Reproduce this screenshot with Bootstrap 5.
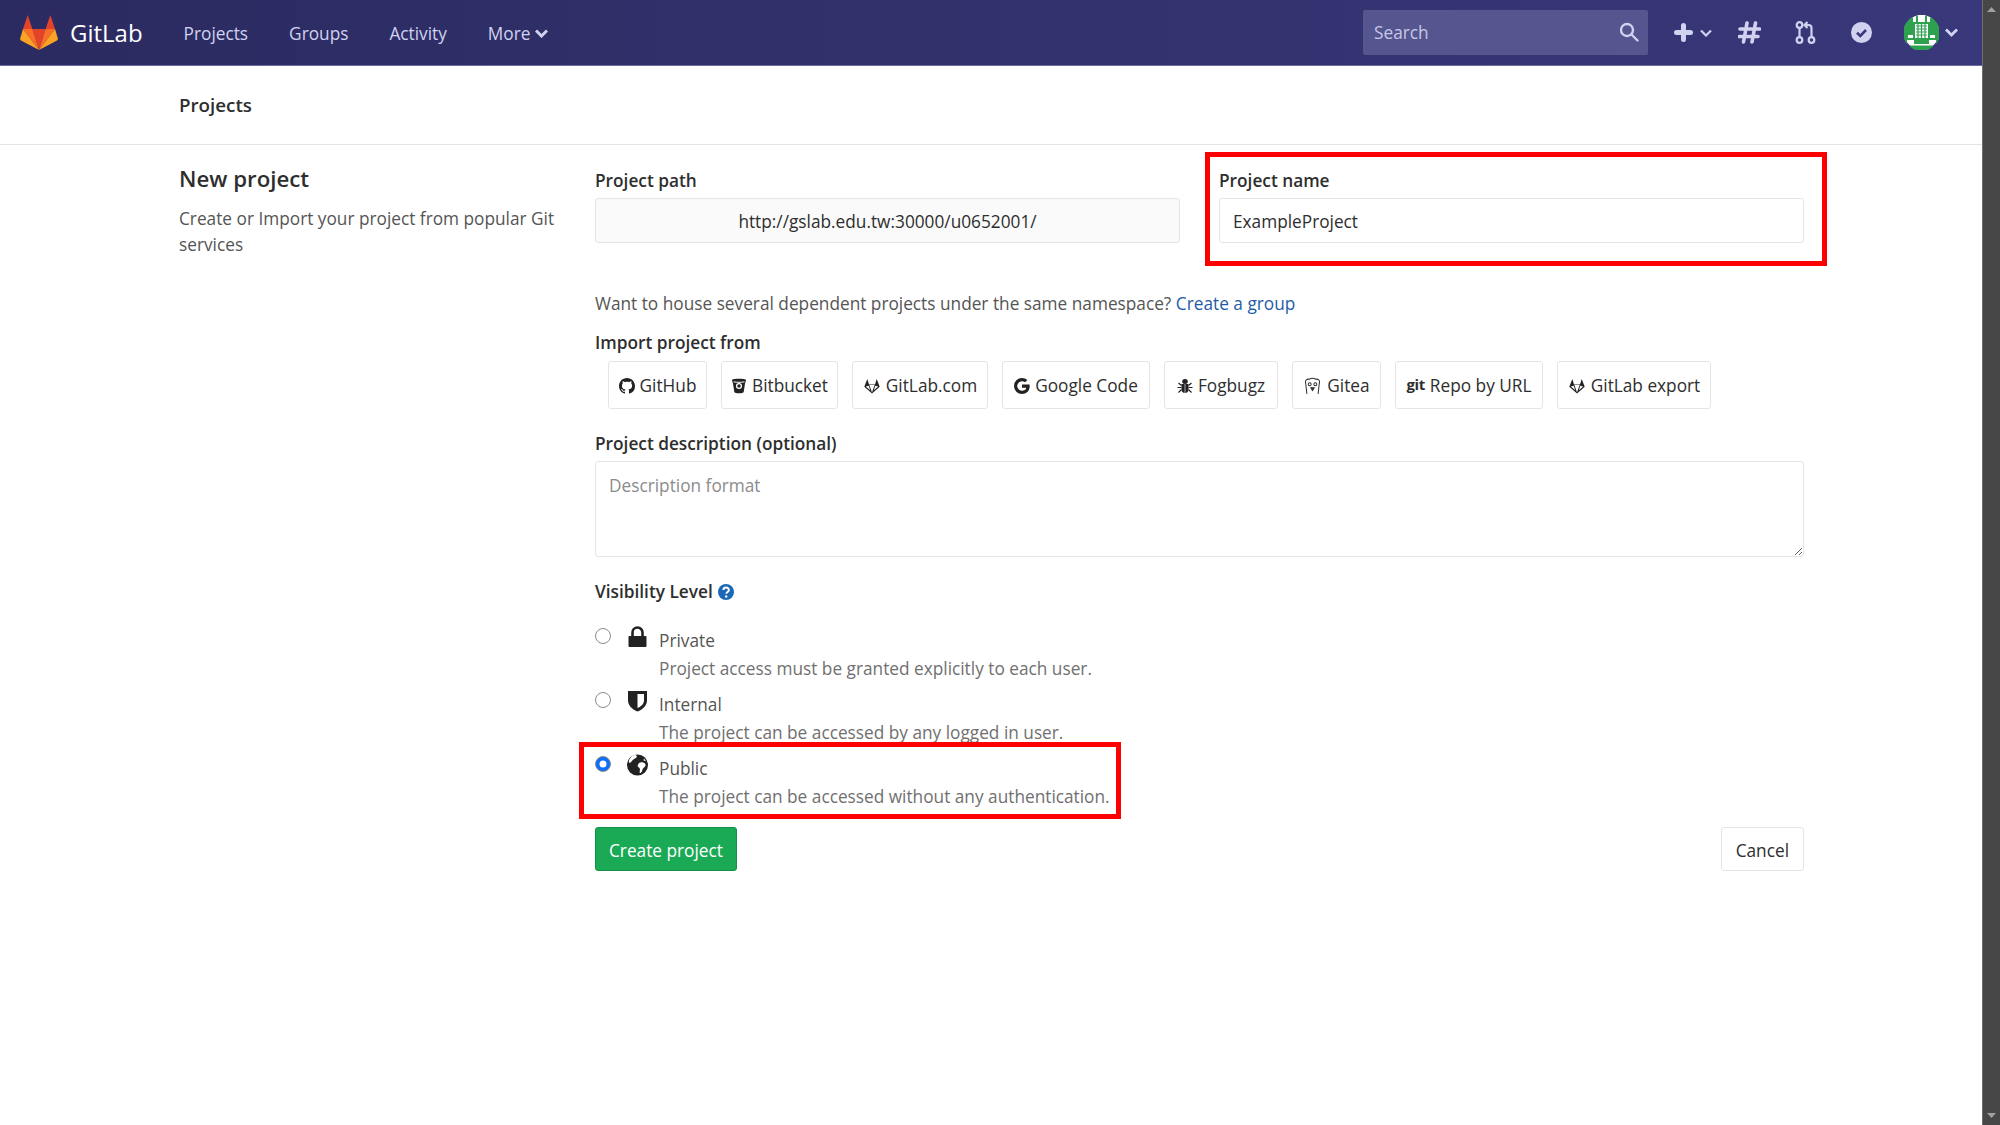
<!DOCTYPE html>
<html lang="en">

<head>
    <meta charset="UTF-8">
    <meta name="viewport" content="width=device-width, initial-scale=1.0">
    <title>New Project - GitLab</title>
    <link href="https://cdn.jsdelivr.net/npm/bootstrap@5.3.3/dist/css/bootstrap.min.css" rel="stylesheet">
    <style>
        body {
            font-family: "Open Sans", "Liberation Sans", sans-serif;
            font-size: 17.25px;
            color: #2e2e2e;
            background: #fff;
            height: 1125px;
            overflow: hidden;
            display: flex;
        }

        .page-area {
            flex: 1 1 auto;
            min-width: 0;
        }

        /* browser scrollbar as it looks in the picture */
        .fake-scroll {
            width: 18px;
            flex: none;
            background: #474747;
            border-left: 1px solid #6f6f6f;
            display: flex;
            flex-direction: column;
            justify-content: space-between;
            align-items: center;
            padding: 7px 0;
        }

        .fake-scroll svg {
            width: 9px;
            height: 5px;
            fill: #a0a0a0;
        }

        .gl-nav {
            height: 66px;
            padding: 0 24px 0 20px;
            background: linear-gradient(90deg, #2b2b61, #38387a);
            border-bottom: 1px solid #6c6c9e;
        }

        .gl-brand {
            display: flex;
            align-items: center;
            gap: 12px;
            padding: 0;
            margin: 0 41px 0 0;
            color: #fff;
            font-size: 24px;
        }

        .gl-brand:hover {
            color: #fff;
        }

        .gl-brand svg {
            width: 38px;
            height: 35px;
        }

        .gl-links {
            gap: 41px;
            padding-top: 2px;
        }

        .navbar-expand .gl-links .nav-link {
            padding: 0;
            color: #d1d1f0;
            font-size: 17.25px;
            display: flex;
            align-items: center;
            gap: 4px;
        }

        .gl-search {
            position: relative;
            width: 285px;
            height: 45px;
        }

        .gl-search input {
            width: 100%;
            height: 100%;
            padding: 0 40px 0 11px;
            background: #55558f;
            border: 0;
            border-radius: 2px;
            font-size: 17.25px;
        }

        .gl-search input::placeholder {
            color: #c8c8e6;
        }

        .gl-search svg {
            position: absolute;
            top: 12px;
            right: 9px;
            width: 20px;
            height: 20px;
        }

        .nav-ic {
            color: #d1d1f0;
            display: block;
            flex: none;
        }

        .ic-more { width: 13px; height: 9px; }
        .ic-plus { margin-left: 26px; width: 19px; height: 19px; }
        .ic-chev { width: 12px; height: 8px; margin-left: 7px; }
        .ic-hash { margin-left: 26px; width: 23px; height: 23px; }
        .ic-mr { margin-left: 34px; width: 21px; height: 23px; }
        .ic-todo { margin-left: 35px; width: 21px; height: 21px; }
        .ic-avatar { margin-left: 32px; width: 35px; height: 35px; }
        .ic-chev2 { width: 13px; height: 9px; margin-left: 6px; }

        .sub-head {
            height: 79px;
            padding: 0 179px;
            border-bottom: 1px solid #e5e5e5;
            font-weight: 600;
            font-size: 18.75px;
            display: flex;
            align-items: center;
        }

        .main-wrap {
            padding: 0 178px 0 179px;
            display: flex;
        }

        .side-col {
            width: 416px;
            flex: none;
            padding: 19px 30px 0 0;
        }

        .side-col h4 {
            font-size: 22.25px;
            font-weight: 600;
            line-height: 30px;
            margin: 0 0 12px;
        }

        .side-col p {
            line-height: 26px;
            margin: 0;
            color: #555;
        }

        .form-col {
            flex: 1 1 auto;
            padding-top: 23px;
        }

        .field-label {
            display: block;
            font-weight: 600;
            line-height: 24px;
            padding-top: 1px;
            margin: 0 0 5px;
        }

        .field-pair {
            display: flex;
            gap: 39px;
        }

        .field-half {
            position: relative;
            flex: 1 1 0;
        }

        .form-control.gl-input {
            height: 45px;
            border: 1px solid #e5e5e5;
            border-radius: 3px;
            font-size: 17.25px;
            color: #2e2e2e;
            padding: 1px 13px 0;
            box-shadow: none;
        }

        .form-control.gl-input[readonly] {
            background: #fafafa;
            text-align: center;
        }

        .red-mark {
            position: absolute;
            border: 5px solid #f00;
            pointer-events: none;
        }

        .mark-name {
            left: -14px;
            right: -23px;
            top: -16px;
            bottom: -23px;
        }

        .mark-public {
            left: -16px;
            width: 542px;
            top: -12px;
            bottom: -1px;
        }

        .group-hint {
            margin: 49px 0 0;
            line-height: 24px;
            color: #555;
        }

        .group-hint a {
            color: #1f5ca8;
            text-decoration: none;
        }

        .import-label {
            margin: 14px 0 6px;
        }

        .import-row {
            display: flex;
            gap: 14px;
            margin-left: 13px;
        }

        .import-btn {
            height: 48px;
            padding: 1px 0 0;
            display: flex;
            align-items: center;
            justify-content: center;
            gap: 5px;
            background: #fff;
            border: 1px solid #e5e5e5;
            border-radius: 3px;
            color: #2e2e2e;
            font-size: 17.25px;
            flex: none;
        }

        .imp-github { width: 99px; }
        .imp-bitbucket { width: 117px; }
        .imp-gitlab { width: 136px; }
        .imp-google { width: 148px; }
        .imp-fogbugz { width: 114px; }
        .imp-gitea { width: 89px; }
        .imp-repo { width: 148px; }
        .imp-export { width: 154px; }

        .import-btn svg {
            width: 16px;
            height: 16px;
            flex: none;
        }

        .import-btn svg.ic-wide {
            width: 18px;
        }

        .import-btn svg.ic-gitea {
            width: 19px;
            height: 18px;
        }

        .import-btn b {
            font-weight: 700;
            font-size: 15px;
            letter-spacing: -.4px;
            margin-top: -3px;
        }

        .desc-label {
            margin: 22px 0 5px;
        }

        textarea.gl-area {
            height: 96px;
            border: 1px solid #e5e5e5;
            border-radius: 3px;
            font-size: 17.25px;
            padding: 11px 13px;
        }

        textarea.gl-area::placeholder {
            color: #8c8c8c;
        }

        .vis-label {
            margin: 22px 0 22px;
            display: flex;
            align-items: center;
            gap: 5px;
        }

        .vis-help {
            width: 16px;
            height: 16px;
        }

        .vis-row {
            position: relative;
            display: flex;
            height: 64px;
        }

        .vis-radio {
            width: 33px;
            flex: none;
        }

        .form-check-input.gl-radio {
            width: 16px;
            height: 16px;
            margin: 2px 0 0;
            border-color: #8d8d8d;
        }

        .vis-icon {
            width: 31px;
            flex: none;
            margin-left: -1px;
            margin-right: 1px;
        }

        .vis-icon svg {
            width: 21px;
            height: 22px;
            display: block;
        }

        .vis-name {
            line-height: 29px;
            color: #555;
        }

        .vis-desc {
            line-height: 28px;
            color: #707070;
        }

        .form-foot {
            margin-top: 9px;
            display: flex;
            justify-content: space-between;
        }

        .btn.gl-create,
        .btn.gl-cancel {
            height: 44px;
            font-size: 17.25px;
            padding: 3px 13px 0;
            border-radius: 3px;
        }

        .btn.gl-cancel {
            padding: 3px 14px 0;
            background: #fff;
            border: 1px solid #e5e5e5;
            color: #2e2e2e;
        }

        .btn.gl-create {
            background: #1aaa55;
            border: 1px solid #168f48;
            color: #fff;
        }
    </style>
</head>

<body>
    <div class="page-area">
        <!-- top bar -->
        <nav class="navbar navbar-expand gl-nav flex-nowrap">
            <a class="navbar-brand gl-brand" href="#">
                <svg viewBox="0 0 38 35">
                    <polygon fill="#e24329" points="19,35 12.4,14 25.6,14" />
                    <polygon fill="#fc6d26" points="19,35 12.4,14 3,14" />
                    <polygon fill="#fc6d26" points="19,35 25.6,14 35,14" />
                    <polygon fill="#fca326" points="3,14 0,24 1,25.5 19,35" />
                    <polygon fill="#fca326" points="35,14 38,24 37,25.5 19,35" />
                    <polygon fill="#e24329" points="3,14 12.4,14 7.7,0" />
                    <polygon fill="#e24329" points="35,14 25.6,14 30.3,0" />
                </svg>
                GitLab
            </a>
            <ul class="navbar-nav gl-links">
                <li class="nav-item"><a class="nav-link" href="#">Projects</a></li>
                <li class="nav-item"><a class="nav-link" href="#">Groups</a></li>
                <li class="nav-item"><a class="nav-link" href="#">Activity</a></li>
                <li class="nav-item">
                    <a class="nav-link" href="#">More
                        <svg class="nav-ic ic-more" viewBox="0 0 13 9" fill="none" stroke="currentColor" stroke-width="3"><path d="M1 1.500l5.500 5.500L12 1.500" /></svg>
                    </a>
                </li>
            </ul>
            <div class="d-flex align-items-center ms-auto">
                <div class="gl-search">
                    <input type="text" placeholder="Search">
                    <svg viewBox="0 0 20 20" fill="none" stroke="#d1d1f0" stroke-width="2.4"><circle cx="8" cy="8" r="6" /><path d="M12.5 12.5l6 6" stroke-linecap="round" /></svg>
                </div>
                <svg class="nav-ic ic-plus" viewBox="0 0 19 19" fill="currentColor"><path d="M7 2.500a2.500 2.500 0 0 1 5 0V7h4.500a2.500 2.500 0 0 1 0 5H12v4.500a2.500 2.500 0 0 1-5 0V12H2.500a2.500 2.500 0 0 1 0-5H7z" /></svg>
                <svg class="nav-ic ic-chev" viewBox="0 0 12 8" fill="none" stroke="currentColor" stroke-width="2.2"><path d="M1 1.500l5 5 5-5" /></svg>
                <svg class="nav-ic ic-hash" viewBox="0 0 23 23" fill="none" stroke="currentColor" stroke-width="3.6" stroke-linecap="round"><path d="M9 2L5.500 21M17.500 2L14 21M2 8h19.500M1.500 15.500H20" /></svg>
                <svg class="nav-ic ic-mr" viewBox="0 0 21 23" fill="none" stroke="currentColor" stroke-width="2.2"><circle cx="4.500" cy="4" r="2.800" /><circle cx="4.500" cy="19" r="2.800" /><circle cx="16.500" cy="19" r="2.800" /><path d="M4.500 7v9M16.500 16V7a3 3 0 0 0-3-3H10" /><path d="M12.500 1L9.500 4l3 3" /></svg>
                <svg class="nav-ic ic-todo" viewBox="0 0 21 21"><circle cx="10.500" cy="10.500" r="10.500" fill="currentColor" /><path d="M6 10.800l3.300 3.200 5.700-6" fill="none" stroke="#38387a" stroke-width="2.6" /></svg>
                <svg class="nav-ic ic-avatar" viewBox="0 0 35 35">
                    <circle cx="17.500" cy="17.500" r="17.500" fill="#fff" />
                    <path d="M12 .9a17.500 17.500 0 0 1 11 0V7h3V2a17.500 17.500 0 0 1 6 27v-4h-7v4H10v-4H3v4a17.500 17.500 0 0 1 6-27v5h3z" fill="#2ea14f" />
                    <rect x="4" y="20" width="5" height="3" fill="#fff" />
                    <rect x="26" y="20" width="5" height="3" fill="#fff" />
                    <rect x="11" y="9" width="13" height="14" fill="#fff" />
                    <path d="M12 11h11M12 14h11M12 17h11M12 20h11M14 9v14M17.500 9v14M21 9v14" stroke="#2ea14f" stroke-width="1.2" />
                    <path d="M6 31.500a17 17 0 0 0 23 0v-1H6z" fill="#2ea14f" />
                    <rect x="14" y="0" width="7" height="7" fill="#fff" />
                </svg>
                <svg class="nav-ic ic-chev2" viewBox="0 0 13 9" fill="none" stroke="currentColor" stroke-width="2.8"><path d="M1 1.500l5.500 5.500L12 1.500" /></svg>
            </div>
        </nav>

        <div class="sub-head">Projects</div>

        <div class="main-wrap">
            <div class="side-col">
                <h4>New project</h4>
                <p>Create or Import your project from popular Git services</p>
            </div>

            <form class="form-col">
                <div class="field-pair">
                    <div class="field-half">
                        <label class="field-label">Project path</label>
                        <input type="text" class="form-control gl-input" value="http://gslab.edu.tw:30000/u0652001/" readonly>
                    </div>
                    <div class="field-half">
                        <label class="field-label">Project name</label>
                        <input type="text" class="form-control gl-input" value="ExampleProject">
                        <div class="red-mark mark-name"></div>
                    </div>
                </div>

                <p class="group-hint">Want to house several dependent projects under the same namespace? <a href="#">Create a group</a></p>

                <label class="field-label import-label">Import project from</label>
                <div class="import-row">
                    <button type="button" class="import-btn imp-github">
                        <svg viewBox="0 0 16 16" fill="#222"><path d="M8 0C3.580 0 0 3.580 0 8c0 3.540 2.290 6.530 5.470 7.590.4.070.55-.17.55-.38 0-.19-.01-.82-.01-1.490-2.010.37-2.530-.49-2.690-.94-.09-.23-.48-.94-.82-1.130-.28-.15-.68-.52-.01-.53.63-.01 1.080.58 1.230.82.72 1.210 1.870.87 2.330.66.07-.52.28-.87.51-1.070-1.780-.2-3.640-.89-3.640-3.950 0-.87.31-1.590.82-2.150-.08-.2-.36-1.020.08-2.120 0 0 .67-.21 2.200.82.64-.18 1.320-.27 2-.27.68 0 1.360.09 2 .27 1.530-1.040 2.200-.82 2.200-.82.44 1.100.16 1.920.08 2.120.51.56.82 1.270.82 2.150 0 3.070-1.870 3.750-3.650 3.950.29.25.54.73.54 1.480 0 1.070-.01 1.930-.01 2.200 0 .21.15.46.55.38A8.012 8.012 0 0 0 16 8c0-4.420-3.580-8-8-8z" /></svg>
                        GitHub
                    </button>
                    <button type="button" class="import-btn imp-bitbucket">
                        <svg viewBox="0 0 16 16" fill="#222"><path d="M1 2C1 .3 15 .3 15 2c0 1.500-.7 2.300-1 3.500l-1.300 8.500c-.2 1.800-9.200 1.800-9.400 0L2 5.500C1.700 4.300 1 3.500 1 2z" /><circle cx="8" cy="8" r="2.400" fill="none" stroke="#fff" stroke-width="1.3" /><path d="M2.500 3.800c3.500.7 7.500.7 11 0" stroke="#fff" fill="none" /></svg>
                        Bitbucket
                    </button>
                    <button type="button" class="import-btn imp-gitlab">
                        <svg class="ic-wide" viewBox="0 0 16 16" fill="#222"><path d="M8 15.500L.3 8.800 3.300 1 5 6.500h6L12.700 1l3 7.800z" /><path d="M8 14.500L5.400 7h5.200zM4.700 7.800L1.800 8.500l4.400 3.800zM11.300 7.800l2.900.7-4.400 3.800z" fill="#fff" /></svg>
                        GitLab.com
                    </button>
                    <button type="button" class="import-btn imp-google">
                        <svg viewBox="0 0 16 16" fill="#222"><path d="M15.545 6.558a9.420 9.420 0 0 1 .139 1.626c0 2.434-.87 4.492-2.384 5.885h.002C11.978 15.292 10.158 16 8 16A8 8 0 1 1 8 0a7.689 7.689 0 0 1 5.352 2.082l-2.284 2.284A4.347 4.347 0 0 0 8 3.166c-2.087 0-3.860 1.408-4.492 3.304a4.792 4.792 0 0 0 0 3.063h.003c.635 1.893 2.405 3.301 4.492 3.301 1.078 0 2.004-.276 2.722-.764h-.003a3.702 3.702 0 0 0 1.599-2.431H8v-3.080h7.545z" /></svg>
                        Google Code
                    </button>
                    <button type="button" class="import-btn imp-fogbugz">
                        <svg viewBox="0 0 16 16" fill="#222"><ellipse cx="8" cy="3.500" rx="2.800" ry="2.500" /><path d="M4.500 6h7v6c0 4-7 4-7 0z" /><path d="M7.700 6h.6v9h-.6z" fill="#fff" /><path d="M1.500 5l3 2.500M14.500 5l-3 2.500M.5 9.500h4M15.500 9.500h-4M1.500 14.500l3-3M14.500 14.500l-3-3" stroke="#222" stroke-width="1.2" /></svg>
                        Fogbugz
                    </button>
                    <button type="button" class="import-btn imp-gitea">
                        <svg class="ic-gitea" viewBox="0 0 16 16" fill="none" stroke="#333" stroke-width=".9"><path d="M3 15L2 6C1 3 3 1.500 5 2c2-1.300 4-1.300 6 0 2-.5 4 1 3 4l-1 9" /><circle cx="5.500" cy="6.500" r="1.300" /><circle cx="10.500" cy="6.500" r="1.300" /><path d="M6.500 9.500L8 12l1.500-2.500z" fill="#333" /></svg>
                        Gitea
                    </button>
                    <button type="button" class="import-btn imp-repo">
                        <b>git</b> Repo by URL
                    </button>
                    <button type="button" class="import-btn imp-export">
                        <svg class="ic-wide" viewBox="0 0 16 16" fill="#222"><path d="M8 15.500L.3 8.800 3.300 1 5 6.500h6L12.700 1l3 7.800z" /><path d="M8 14.500L5.400 7h5.200zM4.700 7.800L1.800 8.500l4.400 3.800zM11.300 7.800l2.900.7-4.400 3.800z" fill="#fff" /></svg>
                        GitLab export
                    </button>
                </div>

                <label class="field-label desc-label">Project description (optional)</label>
                <textarea class="form-control gl-area" placeholder="Description format"></textarea>

                <label class="field-label vis-label">Visibility Level
                    <svg class="vis-help" viewBox="0 0 15 15"><circle cx="7.500" cy="7.500" r="7.500" fill="#1b69b6" /><path d="M5 5.600c.2-3.200 5.300-3 5.200 0 0 1.900-2.400 1.800-2.400 3.500" fill="none" stroke="#fff" stroke-width="1.8" /><circle cx="7.700" cy="11.700" r="1.100" fill="#fff" /></svg>
                </label>

                <div class="vis-row">
                    <div class="vis-radio"><input class="form-check-input gl-radio" type="radio" name="visibility"></div>
                    <div class="vis-icon">
                        <svg viewBox="0 0 21 22" fill="#222"><path d="M2.500 10h16a1 1 0 0 1 1 1v9a1 1 0 0 1-1 1h-16a1 1 0 0 1-1-1v-9a1 1 0 0 1 1-1z" /><path d="M5.500 11V6.500a5 5 0 0 1 10 0V11" fill="none" stroke="#222" stroke-width="2.6" /></svg>
                    </div>
                    <div>
                        <div class="vis-name">Private</div>
                        <div class="vis-desc">Project access must be granted explicitly to each user.</div>
                    </div>
                </div>
                <div class="vis-row">
                    <div class="vis-radio"><input class="form-check-input gl-radio" type="radio" name="visibility"></div>
                    <div class="vis-icon">
                        <svg viewBox="0 0 21 22" fill="#222"><path d="M1 1h19v9c0 6-4.500 9.500-9.500 11.500C5.500 19.500 1 16 1 10z" /><path d="M10.500 4H17v6c0 4-3 6.500-6.500 8z" fill="#fff" /></svg>
                    </div>
                    <div>
                        <div class="vis-name">Internal</div>
                        <div class="vis-desc">The project can be accessed by any logged in user.</div>
                    </div>
                </div>
                <div class="vis-row">
                    <div class="vis-radio"><input class="form-check-input gl-radio" type="radio" name="visibility" checked></div>
                    <div class="vis-icon">
                        <svg viewBox="0 0 21 22"><circle cx="10.500" cy="11" r="10.500" fill="#222" /><path d="M8 1c3 .5 2 2.500 0 3.500S5 7 3.500 8.500 1 7 3 4.500 6 .9 8 1zM12 9c2-1.500 6-.5 6.500 1.500s-1.500 3-2.500 4-.5 3.500-2.500 4.500.3-3.500-1-5-3-1.500-.5-5zM17 4.500l2 2.500-2.500-.5z" fill="#fff" /></svg>
                    </div>
                    <div>
                        <div class="vis-name">Public</div>
                        <div class="vis-desc">The project can be accessed without any authentication.</div>
                    </div>
                    <div class="red-mark mark-public"></div>
                </div>

                <div class="form-foot">
                    <button type="button" class="btn gl-create">Create project</button>
                    <button type="button" class="btn gl-cancel">Cancel</button>
                </div>
            </form>
        </div>
    </div>

    <div class="fake-scroll">
        <svg viewBox="0 0 9 5"><path d="M4.500 0L9 5H0z" /></svg>
        <svg viewBox="0 0 9 5"><path d="M0 0h9L4.500 5z" /></svg>
    </div>

    <script src="https://cdn.jsdelivr.net/npm/bootstrap@5.3.3/dist/js/bootstrap.bundle.min.js"></script>
</body>

</html>
